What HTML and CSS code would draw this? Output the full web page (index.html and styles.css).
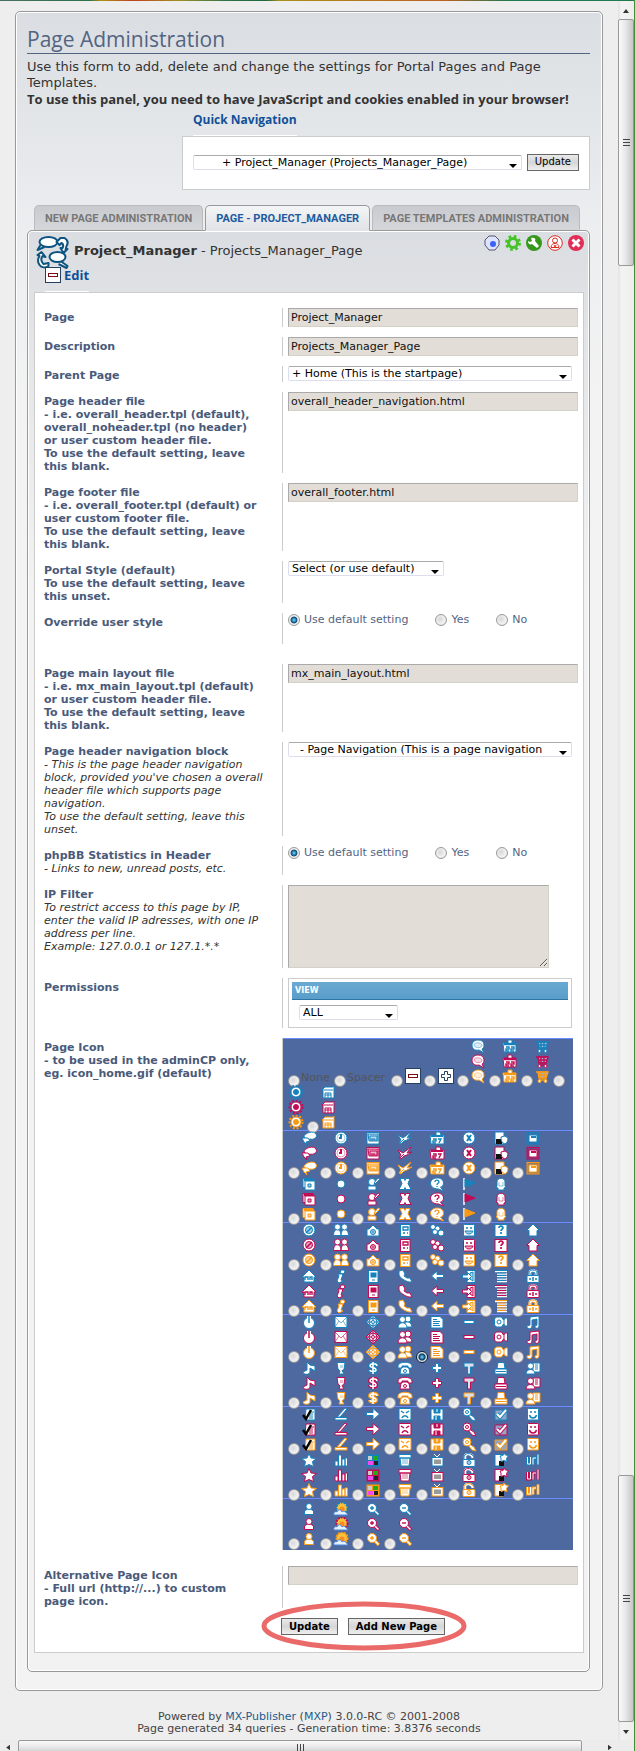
FILE: index.html
```html
<!DOCTYPE html>
<html lang="en">
<head>
<meta charset="utf-8">
<title>Page Administration</title>
<link rel="stylesheet" href="styles.css">
</head>
<body>
<div class="banner"></div>
<div class="window">
  <main class="page">
    <section class="panel">
      <h1>Page Administration</h1>
      <p class="intro">Use this form to add, delete and change the settings for Portal Pages and Page Templates.<br><b>To use this panel, you need to have JavaScript and cookies enabled in your browser!</b></p>

      <form class="quick">
        <label class="legend" for="quicknav">Quick Navigation</label>
        <div class="quick-box">
          <span class="drop drop-grow"><select id="quicknav" class="indent-l"><option>+ Project_Manager (Projects_Manager_Page)</option></select></span>
          <button type="button">Update</button>
        </div>
      </form>

      <nav class="tabs">
        <a class="tab" href="#">NEW PAGE ADMINISTRATION</a>
        <a class="tab active" href="#">PAGE - PROJECT_MANAGER</a>
        <a class="tab" href="#">PAGE TEMPLATES ADMINISTRATION</a>
      </nav>

      <div class="inner">
        <header class="head">
          <svg class="logo" viewBox="0 0 32 33" fill="#fff" stroke="#0d5480" stroke-width="2" stroke-linejoin="round">
            <path d="M4 9L1 14l7-3"/><ellipse cx="12" cy="6" rx="9" ry="5"/>
            <path d="M20 6l4-4h4c3 2 4 5 2 8l-1 4 2-1-4 4-3-5 2 0c1-2 1-4-1-5l-2 2z"/>
            <path d="M1 19l4-3 4 5-3-1c-2 3-1 6 1 8l5-1v3c-3 2-7 2-9-1-2-3-2-6 0-9z"/>
            <path d="M24 25l7 5-1 2-8-4"/><ellipse cx="21" cy="21" rx="8" ry="5"/>
          </svg>
          <div class="title"><b>Project_Manager</b> - Projects_Manager_Page</div>
          <div class="actions">
            <svg viewBox="0 0 16 16"><path d="M5 1h6l4 4v5l-4 5H5l-4-5V5z" fill="#dde3ff" stroke="#556" /><circle cx="9" cy="9" r="3" fill="#3c62f5"/></svg>
            <svg viewBox="0 0 16 16" fill="none" stroke="#45c42a"><circle cx="8" cy="8" r="6.5" stroke-width="3" stroke-dasharray="2.6 2.5"/><circle cx="8" cy="8" r="4.5" stroke-width="3"/></svg>
            <svg viewBox="0 0 16 16"><circle cx="8" cy="8" r="8" fill="#36981b"/><path d="M5 3l1 3-2 1-2-1c0 3 2 4 4 3l5 4 2-2-4-5c1-2 0-4-4-3z" fill="#fff"/></svg>
            <svg viewBox="0 0 16 16" fill="#fff" stroke="#e02a20"><circle cx="8" cy="8" r="7.3"/><circle cx="8" cy="5.5" r="2.5"/><path d="M4 12.5c0-3 2-4 4-4s4 1 4 4z"/><path d="M7 10l1 2 1-2"/></svg>
            <svg viewBox="0 0 16 16"><circle cx="8" cy="8" r="8" fill="#e22d56"/><path d="M4.5 4.5l7 7m0-7l-7 7" stroke="#fff" stroke-width="3"/></svg>
          </div>
        </header>
        <a class="edit" href="#"><svg viewBox="0 0 16 16"><rect x=".5" y=".5" width="15" height="15" fill="#fff" stroke="#26415f"/><rect x="3.5" y="6.5" width="9" height="3" fill="#fff" stroke="#7a0c12"/></svg>Edit</a>

        <form class="box">
          <div class="row">
            <label class="name" for="page">Page</label>
            <div class="field"><input id="page" class="text" type="text" value="Project_Manager"></div>
          </div>
          <div class="row">
            <label class="name" for="desc">Description</label>
            <div class="field"><input id="desc" class="text" type="text" value="Projects_Manager_Page"></div>
          </div>
          <div class="row">
            <label class="name" for="parent">Parent Page</label>
            <div class="field"><span class="drop drop-wide"><select id="parent"><option>+ Home (This is the startpage)</option></select></span></div>
          </div>
          <div class="row">
            <label class="name" for="hfile">Page header file<br>- i.e. overall_header.tpl (default),<br>overall_noheader.tpl (no header)<br>or user custom header file.<br>To use the default setting, leave<br>this blank.</label>
            <div class="field"><input id="hfile" class="text" type="text" value="overall_header_navigation.html"></div>
          </div>
          <div class="row">
            <label class="name" for="ffile">Page footer file<br>- i.e. overall_footer.tpl (default) or<br>user custom footer file.<br>To use the default setting, leave<br>this blank.</label>
            <div class="field"><input id="ffile" class="text" type="text" value="overall_footer.html"></div>
          </div>
          <div class="row">
            <label class="name" for="style">Portal Style (default)<br>To use the default setting, leave<br>this unset.</label>
            <div class="field"><span class="drop drop-mid"><select id="style"><option>Select (or use default)</option></select></span></div>
          </div>
          <div class="row row-override">
            <span class="name" id="over">Override user style</span>
            <div class="field radios" role="radiogroup" aria-labelledby="over">
              <label><input type="radio" name="over" checked>Use default setting</label>
              <label><input type="radio" name="over">Yes</label>
              <label><input type="radio" name="over">No</label>
            </div>
          </div>
          <div class="row">
            <label class="name" for="mfile">Page main layout file<br>- i.e. mx_main_layout.tpl (default)<br>or user custom header file.<br>To use the default setting, leave<br>this blank.</label>
            <div class="field"><input id="mfile" class="text" type="text" value="mx_main_layout.html"></div>
          </div>
          <div class="row">
            <label class="name" for="nav">Page header navigation block<br><i>- This is the page header navigation<br>block, provided you've chosen a overall<br>header file which supports page<br>navigation.<br>To use the default setting, leave this<br>unset.</i></label>
            <div class="field"><span class="drop drop-wide"><select id="nav" class="indent-s"><option>- Page Navigation (This is a page navigation</option></select></span></div>
          </div>
          <div class="row">
            <span class="name" id="stats">phpBB Statistics in Header<br><i>- Links to new, unread posts, etc.</i></span>
            <div class="field radios" role="radiogroup" aria-labelledby="stats">
              <label><input type="radio" name="stats" checked>Use default setting</label>
              <label><input type="radio" name="stats">Yes</label>
              <label><input type="radio" name="stats">No</label>
            </div>
          </div>
          <div class="row">
            <label class="name" for="ip">IP Filter<br><i>To restrict access to this page by IP,<br>enter the valid IP adresses, with one IP<br>address per line.<br>Example: 127.0.0.1 or 127.1.*.*</i></label>
            <div class="field"><textarea id="ip"></textarea></div>
          </div>
          <div class="row">
            <span class="name">Permissions</span>
            <div class="field">
              <div class="perm">
                <label class="view" for="view">VIEW</label>
                <span class="drop drop-small"><select id="view"><option>ALL</option></select></span>
              </div>
            </div>
          </div>
          <div class="row row-icons">
            <span class="name" id="picon">Page Icon<br>- to be used in the adminCP only,<br>eg. icon_home.gif (default)</span>
            <div class="icons" id="icons" role="radiogroup" aria-labelledby="picon"></div>
          </div>
          <div class="row">
            <label class="name" for="alt">Alternative Page Icon<br>- Full url (http://...) to custom<br>page icon.</label>
            <div class="field"><input id="alt" class="text" type="text"></div>
          </div>
          <div class="submit">
            <div class="submit-group">
              <button type="button">Update</button>
              <button type="button">Add New Page</button>
              <svg class="ring" viewBox="0 0 206 50"><ellipse cx="103" cy="25" rx="100" ry="22" fill="none" stroke="#ea6a69" stroke-width="5"/></svg>
            </div>
          </div>
        </form>
      </div>
    </section>
    <footer>Powered by <a href="#">MX-Publisher</a> (<a href="#">MXP</a>) 3.0.0-RC © 2001-2008<br>Page generated 34 queries - Generation time: 3.8376 seconds</footer>
  </main>
  <div class="vbar">
    <svg class="arrow" viewBox="0 0 16 18"><path d="M5 12l3-4 3 4z" fill="#333"/></svg>
    <div class="vthumb"><i></i><i></i><i></i></div>
    <div class="track"></div>
    <div class="vthumb"><i></i><i></i><i></i></div>
    <svg class="arrow" viewBox="0 0 16 18"><path d="M5 8h6l-3 4z" fill="#333"/></svg>
  </div>
</div>
<div class="hbar">
  <svg class="harrow" viewBox="0 0 18 16"><path d="M10 5v6l-4-3z" fill="#333"/></svg>
  <div class="hthumb"><i></i><i></i><i></i></div>
  <svg class="harrow harrow-end" viewBox="0 0 18 16"><path d="M9 5v6l4-3z" fill="#333"/></svg>
</div>
<script src="icons.js"></script>
</body>
</html>
```
FILE: styles.css
```css
* { box-sizing: border-box; }
body { margin: 0; background: #eee; color: #333; font: 11px/13px "DejaVu Sans", Verdana, sans-serif; border-right: 1px solid #3f8f35; }
a { color: #115098; text-decoration: none; }
button, input, select, textarea { font: inherit; margin: 0; border-radius: 0; }

.banner { height: 1px; background: linear-gradient(90deg, #4a7060, #2c7048 14%, #b09010 16%, #c04020 21%, #a09020 28%, #2c7048 36%, #20683c 42%, #a89018 44%, #c06020 70%, #20784c 80%); }
.window { display: grid; grid-template-columns: minmax(0, 1fr) 16px; }
.page { padding: 10px 15px 0; }

.panel { border: 1px solid #999; border-radius: 5px; padding: 13px 12px 18px 11px; box-shadow: inset 0 0 0 1px #fff; background: linear-gradient(#dadee2, #eceef0 220px, #f3f3f3 400px); }
h1 { margin: 0; height: 29px; font: 21px/28px "Open Sans", "Trebuchet MS", sans-serif; color: #536482; border-bottom: 1px solid #536482; }
.intro { margin: 5px 0 0; font-size: 13px; line-height: 16px; }
.intro b { font-family: "Open Sans", Verdana, sans-serif; }

.quick { margin: 4px 0 0 155px; }
.legend { display: block; width: max-content; margin-left: 11px; height: 24px; font: bold 12px/16px "Open Sans", "Trebuchet MS", sans-serif; color: #115098; border-bottom: 1px solid #fff; }
.quick-box { display: flex; align-items: center; gap: 5px; height: 54px; padding: 0 10px 2px; border: 1px solid #ccc; background: #fff; }

button { height: 17px; padding: 0 7px; border: 1px solid #666; background: linear-gradient(#e9e9e9, #d6d6d6 50%, #efefef); color: #000; font-size: 10px; line-height: 14px; }

.drop { position: relative; display: block; height: 15px; color: #000; }
.drop::after { content: ""; position: absolute; right: 5px; top: 9px; border: 4px solid transparent; border-top-color: #000; border-bottom: 0; pointer-events: none; }
.drop select { display: block; width: 100%; height: 15px; padding: 0 0 0 3px; appearance: none; border: 1px solid #dde; border-top-color: #aaa; border-radius: 2px; background: #fff; color: #000; line-height: 13px; }
.drop select.indent-l { padding-left: 28px; }
.drop select.indent-s { padding-left: 11px; }
.drop-grow { flex: 1; }
.drop-wide { margin-right: 6px; }
.drop-mid { width: 156px; }
.drop-small { width: 99px; margin: 5px 7px 4px; }

.tabs { display: flex; gap: 2px; margin: 15px 0 -1px 7px; }
.tab { height: 26px; padding: 0 10px; border: 1px solid #bbb; border-bottom-color: #999; border-radius: 5px 5px 0 0; background: linear-gradient(#c9cacf, #d5d6da); color: #777; font: bold 11px/26px Roboto, Arial, sans-serif; white-space: nowrap; }
.tab.active { position: relative; border-color: #999; border-bottom-color: #e4e6e9; background: linear-gradient(#f4f5f6, #e0e2e6); color: #1c5b9f; }

.inner { border: 1px solid #999; border-radius: 5px; padding: 4px 5px 18px 6px; box-shadow: inset 0 0 0 1px #fff; background: linear-gradient(#dadde1, #e2e4e7 100px, #f2f2f2 360px); }
.head { display: flex; align-items: flex-start; }
.logo { width: 33px; height: 33px; margin: 1px 0 -2px 2px; }
.title { flex: 1; padding-left: 5px; font-size: 13px; line-height: 32px; }
.actions { display: flex; gap: 5px; }
.actions svg { width: 16px; height: 16px; }
.edit { display: flex; gap: 3px; width: max-content; height: 25px; margin-left: 11px; font: bold 13px/16px "Open Sans", "Trebuchet MS", sans-serif; border-bottom: 1px solid #fff; }
.edit svg { width: 16px; height: 16px; }

.box { display: grid; gap: 10px; padding: 15px 5px 17px 9px; border: 1px solid #ccc; background: #fff; }
.row { display: grid; grid-template-columns: 238px minmax(0, 1fr); }
.name { padding-top: 3px; font-weight: bold; color: #4a5a7a; }
.name i { font-weight: normal; color: #333; }
.field { border-left: 1px solid #ccc; padding-left: 5px; }
.text, textarea { display: block; height: 19px; border: 1px solid #d4d1c6; border-top-color: #aaa; border-left-color: #aaa; background: #e2ddd7; color: #111; }
.text { width: 100%; padding: 0 0 0 2px; }
textarea { width: calc(100% - 29px); height: 83px; }
.row-override { min-height: 41px; padding-bottom: 10px; }
.radios { display: flex; gap: 27px; color: #536482; }
.radios label { display: flex; gap: 4px; height: 13px; }
input[type="radio"] { flex: none; appearance: none; width: 12px; height: 12px; border: 1px solid #999; border-radius: 50%; background: radial-gradient(circle at 40% 40%, #d8d8d8, #f2f2f2 60%, #ccc); }
.radios input { margin-top: 1px; }
input[type="radio"]:checked { background: radial-gradient(#56b8e8 10%, #0d4c74 42%, #f0f0f0 55%); }
.perm { margin-right: 6px; padding: 3px; border: 1px solid #ccc; }
.view { display: block; height: 18px; padding-left: 3px; background: linear-gradient(#6aaad2, #5a9dca); border-bottom: 1px solid #2f75a5; color: #fff; font-weight: bold; font-size: 8px; line-height: 18px; }
.row-icons { margin-bottom: 6px; }

.icons { margin-right: 5px; border-left: 1px solid #ccc; background: #4e68a0; color: #555; }
.block { display: grid; gap: 1px; padding-left: 5px; border-top: 1px solid #6b8cff; }
.block:last-child { padding-top: 3px; padding-bottom: 3px; }
.line { display: flex; height: 45px; }
.item { display: flex; align-items: flex-end; gap: 1px; width: 32px; }
.item input { margin-bottom: -3px; }
.item input:checked { border-color: #123; background: radial-gradient(#56b8e8 10%, #0d3c5c 42%, #dde6ee 60%); }
.item.none { width: 46px; }
.item.spacer { width: 57px; }
.item.sign { width: 33px; }
.item.lead { width: 19px; }
.item .word { line-height: 13px; }
.trio { display: grid; width: 16px; }
.trio svg, .item svg { display: block; width: 16px; height: 15px; }
.item .big { height: 16px; margin-left: 1px; }
.trio svg { fill: #fff; stroke: currentColor; }
.blue { color: #1583bd; }
.red { color: #c20a55; }
.orange { color: #fb9a12; }

.submit { padding-left: 237px; }
.submit-group { position: relative; display: flex; gap: 10px; width: max-content; }
.submit button { font-weight: bold; }
.ring { position: absolute; left: -20px; top: -17px; width: 206px; height: 50px; pointer-events: none; }

footer { padding: 20px 0 5px; text-align: center; line-height: 12px; color: #444; }
footer a { color: #1c5b8f; }

.vbar { display: flex; flex-direction: column; background: linear-gradient(90deg, #e2e2e2, #f3f3f3 20%, #eee); }
.arrow { width: 16px; height: 18px; }
.track { flex: 1; }
.vthumb { display: flex; flex-direction: column; justify-content: center; align-items: center; gap: 2px; height: 247px; border: 1px solid #999; border-radius: 2px; background: linear-gradient(90deg, #fafafa, #e8e8ea 45%, #c6c6ca); }
.vthumb i { width: 7px; height: 1px; background: #444; }
.hbar { display: flex; height: 15px; background: #ececec; }
.harrow { width: 18px; height: 15px; }
.hthumb { flex: 1; display: flex; justify-content: center; align-items: center; gap: 2px; border: 1px solid #999; border-radius: 2px; background: linear-gradient(#fafafa, #e8e8ea 45%, #c6c6ca); }
.hthumb i { width: 1px; height: 7px; background: #444; }
.harrow-end { margin: 0 17px; }
```
FILE: icons.js
```js
// Icon shapes on a 16x15 grid; "C" stands for the tint colour, default fill is white.
const shapes = {
  chat: '<path d="M8 1c4 0 6 2 6 5s-1 3-2 4l2 4-5-3C4 12 2 9 2 6s3-5 6-5z"/><path d="M4 6c0-3 7-3 8 0s-7 4-8 0" fill="C" fill-opacity=".15" stroke-opacity=".4"/>',
  cal: '<path d="M1 4h5V1h4v3h4v9H2z"/><path d="M2 5h12" stroke-width="2.5"/><path d="M4 8h3v2H4v2h3M9 8h3v2H9v2h3" fill="none" stroke-width="1.4"/>',
  cart: '<path d="M4 3l1 6h7l2-6z" fill-opacity=".5"/><path d="M2 3h2l1 6h7l2-6H4M4 6h9M7 3v6M10 3v6M5 11h8" fill="none" stroke-width="1.4"/><circle cx="5.5" cy="12" r="1.5"/><circle cx="11.5" cy="12" r="1.5"/>',
  gear: '<circle cx="8" cy="7" r="6.5" fill="none" stroke-width="2" stroke-dasharray="2 1.7"/><circle cx="8" cy="7" r="5" stroke-width="1"/><circle cx="8" cy="7" r="2.5" fill="C"/>',
  store: '<path d="M2 5l3-3h8l1-1v12H3V6z"/><path d="M3 5h10M5 13V8h6v5M5 10h6M8 8v5" fill="none"/>',
  chats: '<path d="M3 6c0-4 10-7 12-3s-3 6-6 5l-2 1z"/><path d="M1 7h6l2 3-4 1 1 3-3-3z"/>',
  clock: '<circle cx="8" cy="7" r="6"/><circle cx="8" cy="7" r="4" fill="none" stroke-opacity=".4"/><path d="M8 3v4H6" fill="none" stroke-width="2"/>',
  pc: '<rect x="2" y="1.5" width="12" height="11.5"/><path d="M3 3h10v7H4z" fill="C" fill-opacity=".3"/><path d="M5 5h7v4H5zM6 8h4" fill="none"/>',
  scissors: '<path d="M1 4l5 3 8-6-4 6 5-1-5 3-3 1-3 3-2-1 2-3z"/><path d="M3 12l4-4"/>',
  date: '<path d="M1 4h6V1h4l1 3h3v9H2z"/><path d="M2 5h12" stroke-width="2"/><path d="M4 8h3v2H4v2h3M9 8h3l-2 4" fill="none" stroke-width="1.4"/>',
  x: '<circle cx="8" cy="7" r="6"/><path d="M6 4l4 6M10 4l-4 6" stroke-width="2"/>',
  shield: '<path d="M2 1h9v12H2z"/><path d="M3 8h6v5H3z" fill="#111" stroke="none"/><path d="M8 6l4-1 3 2c0 3-1 5-3 6-3-1-4-3-4-7z"/>',
  frame: '<rect x="2" y="1.5" width="12" height="11.5" fill="C" fill-opacity=".4"/><rect x="4" y="4" width="8" height="7"/><path d="M6 6h5" stroke-width="2"/>',
  copy: '<path d="M2 1.5h10v9H2z"/><path d="M4 4h10v9H4z"/><path d="M7 7h3v3H7z" fill="C" fill-opacity=".4"/><path d="M3 3h10" stroke-width="2"/>',
  dot: '<path d="M8 3l3 1 1 3-1 3-3 1-3-1-1-3 1-3z"/>',
  edit: '<circle cx="7" cy="5" r="3.5"/><path d="M3 13V9h8v4z"/><path d="M9 6l4-5 2 1-5 5z"/>',
  expand: '<path d="M3 1.5h4l1 2 1-2h4l-2 5 3 6H9l-1-2-1 2H2l3-6z"/>',
  ask: '<path d="M8 1c4 0 6.5 2 6.5 5s-2 4-3 4l3 4-5-2C4 12 1.5 9 1.5 6S5 1 8 1z"/><path d="M6 5c0-3 4-2 4 0 0 1-2 1-2 3M8 9v1" fill="none" stroke-width="1.3"/>',
  flag: '<path d="M3 1v12" stroke="#fff" stroke-width="1.5"/><path d="M4 2l10 4-10 4z" fill="C"/>',
  ghost: '<path d="M4 9V5c0-5 8-5 8 0v4l1 1-2 1v2H5v-2l-2-1z"/><path d="M6 5v4h4V5" fill="none" stroke-opacity=".5"/>',
  forbid: '<circle cx="8" cy="7" r="6"/><circle cx="8" cy="7" r="3.5" fill="C" fill-opacity=".4"/><path d="M5 10l6-6" stroke-width="1.5"/>',
  group: '<path d="M.5 12.5c0-8 7.5-8 7.5 0zM8 12.5c0-8 7.5-8 7.5 0z"/><circle cx="4.5" cy="4" r="3"/><circle cx="11.5" cy="4" r="3"/>',
  camera: '<path d="M2 6h2l4-4 4 4h2v7H2z"/><circle cx="8" cy="9" r="2.5" fill="C" fill-opacity=".4"/><path d="M8 8v2"/>',
  pad: '<rect x="3.5" y="1.5" width="9.5" height="12"/><path d="M6 4h5v3H6zM6 10h2M10 10h1" stroke-width="1.3"/>',
  groups: '<circle cx="4" cy="4" r="2.5"/><circle cx="8.5" cy="5.5" r="2.5"/><circle cx="6" cy="9" r="2.5"/><circle cx="12" cy="10" r="3"/>',
  smiley: '<rect x="2.5" y="1.5" width="11" height="11.5" rx="1"/><path d="M6 4v2M10 4v2" stroke-width="1.5"/><path d="M4 8h8c-1 4-7 4-8 0z" fill="C" fill-opacity=".4"/>',
  question: '<rect x="2" y="1.5" width="12" height="12"/><path d="M6 5c0-3 4-2 4 0 0 1-2 1-2 3M8 9v2" fill="none" stroke-width="1.7"/>',
  up: '<path d="M8 1l6.5 6.5H12V13H4V7.5H1.5z"/>',
  home: '<path d="M1 8l7-7 7 7h-2v5H3V8z"/><path d="M4 11V8h3v3M9 11V8h2v3" fill="none" stroke-width="1.4"/>',
  info: '<path d="M8 1l3 0 1 2-2 2-3-1zM5 5h5l-2 6 2 1-4 2-2-2 2-5z"/>',
  pda: '<rect x="3.5" y="1.5" width="9.5" height="12"/><rect x="6" y="4" width="5" height="4" fill="C"/><path d="M7 11h3"/>',
  handset: '<path d="M2 2l4-1 2 4-1 2 3 2 3 0 2 4-3 0c-4-1-9-4-10-7z"/>',
  left: '<path d="M14.5 5.5H8V2L2.5 7 8 12V8.5h6.5z"/>',
  login: '<path d="M6 1.5h8v12H6z"/><path d="M9 4l3-1v9l-3-2z" fill="C" fill-opacity=".3"/><path d="M1.5 6h5V3.5l4 4-4 4V9h-5z"/>',
  list: '<path d="M2 2.5h12M4 5h10M4 7.5h10M4 10h10M4 12.5h10" stroke="#fff" stroke-width="1.5"/><path d="M2 1.5h12M4 4h9M4 6.5h9M4 9h9M4 11.5h9"/>',
  lock: '<path d="M5 7V4c0-3 6-3 6 0v3" fill="none" stroke="#fff" stroke-width="3"/><path d="M4 6V4c0-4 8-4 8 0v2M6 6V4c0-1 4-1 4 0v2" fill="none"/><rect x="2" y="6.5" width="12" height="7" rx="1"/><path d="M8 8v4M5 9v2M11 9v2" stroke-width="1.5"/>',
  power: '<circle cx="8" cy="8" r="5.5"/><path d="M8 1v7" stroke="#fff" stroke-width="4"/><path d="M8 1v7" stroke-width="1.5"/>',
  mail: '<rect x="2" y="1.5" width="12" height="11"/><path d="M2 2l6 6 6-6M2 12l4-6M14 12l-4-6" fill="none" stroke-opacity=".6"/>',
  target: '<path d="M8 0l7 7-7 7-7-7z" fill-opacity=".7"/><circle cx="8" cy="7" r="4" fill-opacity=".5"/><circle cx="8" cy="7" r="1.5"/><path d="M8 1v4M8 9v4M2 7h4M10 7h4"/>',
  people: '<path d="M7 12c0-7 7-7 8 0z"/><circle cx="11" cy="4" r="3"/><path d="M1 13c0-7 9-7 9 0z"/><circle cx="5.5" cy="4.5" r="3"/>',
  news: '<path d="M2 1.5h9l3 3V13H2z"/><path d="M4 4.5h4M4 6.5h7M4 8.5h6M4 10.5h7"/>',
  minus: '<rect x="3" y="5.5" width="10" height="3"/>',
  plus: '<path d="M6.5 2.5h3v3h3v3h-3v3h-3v-3h-3v-3h3z"/>',
  video: '<path d="M1.5 4l2-2h5l2 3 2-2h2v8h-2l-2-2-2 3h-5l-2-2z"/><circle cx="6" cy="7" r="2"/><path d="M11 4v6"/>',
  music: '<path d="M5 2l9-1v10c0 3-5 3-4 0l2-1V4L7 5v6c0 4-6 3-5 0l3-1z"/>',
  note: '<path d="M6 1l3 3 5 1v5l-5-3v4c0 3-7 3-7 0l4-2z"/>',
  glass: '<path d="M4 1.5h8l-1 7-2 1 2 3.5H6l1-3-2-2z"/><path d="M7 4h3v3H7z" fill="C" fill-opacity=".3" stroke="none"/>',
  dollar: '<path d="M12 5c0-3-7-3-7 0 0 2 6 1 6 4 0 2-6 2-6 0M8 1v12" fill="none" stroke-width="4"/><path d="M12 5c0-3-7-3-7 0 0 2 6 1 6 4 0 2-6 2-6 0M8 1v12" fill="none" stroke="#fff" stroke-width="1.5"/>',
  phone: '<path d="M3 13l1-6 2-1h4l2 1 1 6zM1 5c0-5 14-5 14 0v2h-4V5H5v2H1z"/><circle cx="8" cy="10" r="1.5"/>',
  tee: '<path d="M3 2h10v4H9.5v7h-3V6H3z" fill-opacity=".8"/>',
  printer: '<path d="M5 1.5h6l1 6H4zM2 8h12v5H2z"/><path d="M3 10.5h10"/>',
  contact: '<path d="M8 2h7v9H8z"/><path d="M10 4h3M10 6h3M10 8h3"/><path d="M1 13c0-6 9-6 9 0z"/><circle cx="5.5" cy="5" r="3"/>',
  check: '<path d="M5 2h9v11H4z"/><path d="M8 5h5M8 7h4M8 9h4M8 11h4"/><path d="M2 8l3 4 5-9" fill="none" stroke="#000" stroke-width="2.5"/>',
  pen: '<path d="M4 10l8-9 2 1-7 8z"/><path d="M2 10.5h12v2.5H2z"/>',
  right: '<path d="M1.5 5.5H8V1.5L14.5 7 8 13V8.5H1.5z"/>',
  sad: '<rect x="2" y="1.5" width="12" height="11.5" rx="1"/><path d="M4 4l3 2M12 4L9 6M5 11c1-3 5-3 6 0" fill="none" stroke-width="1.4"/>',
  save: '<path d="M2 2h12v11H2z"/><path d="M5 2h6v4H5zM5 9h6v4H5z" fill="C"/><path d="M7 9v4M8 2v3" stroke="#fff"/>',
  keys: '<path d="M8 7l5 3 2 4-4-1-4-5z"/><circle cx="6" cy="5" r="4"/><circle cx="6" cy="5" r="1.5"/>',
  tick: '<path d="M2 3h9l3-1v11H2z" fill="#fff" fill-opacity=".4"/><path d="M4 7l3 3 6-7" fill="none" stroke-width="4"/><path d="M4 7l3 3 6-7" fill="none" stroke="#fff" stroke-width="2"/>',
  smile: '<rect x="2.5" y="1.5" width="11" height="11.5" rx="1"/><path d="M6 4v2M10 4v2" stroke-width="1.5"/><path d="M4.5 8c1 4 6 4 7 0" fill="none" stroke-width="1.5"/>',
  star: '<path d="M8 .5l2 4.5 5.5.5-4 3 1 5-4.500-2-4.500 2 1-5-4-3L6 5z"/>',
  chart: '<path d="M2 8h3v5H2zM5.5 2h3v11h-3zM9 6h3v7H9zM12 5h2.5v8H12z"/>',
  squares: '<rect x="2" y="2" width="12" height="11" fill="C"/><path d="M3 3h4v4H3z" fill="#ccc" stroke="none"/><path d="M8 3h5v4H8z" fill="#1fae10" stroke="none"/><path d="M3 8h5v4H3z" fill="#f648f0" stroke="none"/><path d="M9 8h4v4H9z" fill="#222" stroke="none"/>',
  trash: '<path d="M3 5h10l-1 8H4zM2 1.5h12V5H2z"/><path d="M6 6v5M8 6v5M10 6v5" stroke-opacity=".6"/>',
  tv: '<path d="M5 1l3 3 3-3" fill="none" stroke="#fff"/><rect x="3" y="4.5" width="11" height="8.5"/><rect x="5" y="6.5" width="7" height="4.5" fill="#999" stroke="none"/>',
  unlock: '<path d="M4 6V3c1-3 7-3 8 2" fill="none" stroke="#fff" stroke-width="2.5"/><path d="M3 6V3c2-4 9-3 10 2" fill="none"/><rect x="2" y="6.5" width="12" height="7" rx="1"/><circle cx="8" cy="9.5" r="2" fill="C" fill-opacity=".4"/>',
  shapes: '<path d="M2 1.5h8V13H2z"/><path d="M6 8h5v5H6z" fill="#111" stroke="none"/><path d="M11 0l1.5 2 3 .5-2 3 .5 3-3-1-3 1V5L7 3l3-.5z"/>',
  url: '<path d="M2.5 4v7h3V4M8 11.5V5h3M13 1.5v10" fill="none" stroke-width="3"/><path d="M2.5 4v7h3V4M8 11.5V5h3M13 1.5v10" fill="none" stroke="#fff"/>',
  person: '<path d="M3.5 12.5V9l3-2h3l3 2v3.5z"/><circle cx="8" cy="4.5" r="3"/>',
  weather: '<circle cx="9" cy="6" r="5.5" fill="#f8c33a" stroke-width="2" stroke-dasharray="2 1"/><circle cx="9" cy="7" r="2.5" fill="#ff8a20" stroke="none"/><path d="M1 13c-1-3 2-4 3-3 1-3 4-3 5 0 2-2 4 0 6 3z" fill="#e4f2ff" stroke="#4b86dd"/>',
  zoomin: '<circle cx="7" cy="6" r="4.5"/><path d="M10 9l4 4" stroke-width="3.5"/><path d="M10 9l3.5 3.5" stroke="#fff" stroke-width="1.5"/><path d="M5 6h4M7 4v4" stroke-width="1.4"/>',
  zoomout: '<circle cx="7" cy="6" r="4.5"/><path d="M10 9l4 4" stroke-width="3.5"/><path d="M10 9l3.5 3.5" stroke="#fff" stroke-width="1.5"/><path d="M5 6h4" stroke-width="1.4"/>'
};
const sign = d => `<svg class="big" viewBox="0 0 16 16"><rect x=".5" y=".5" width="15" height="15" fill="#fff" stroke="#26415f"/>${d}</svg>`;
const minusSign = sign('<rect x="3.5" y="6.5" width="9" height="3" fill="#fff" stroke="#7a0c12"/>');
const plusSign = sign('<path d="M6.5 3.5h3v3h3v3h-3v3h-3v-3h-3v-3h3z" fill="#fff" stroke="#26415f"/>');

const trio = name => '<span class="trio">' + ['blue', 'red', 'orange'].map(tone =>
  `<svg class="${tone}" viewBox="0 0 16 15">${shapes[name].replace(/"C"/g, '"currentColor"')}</svg>`).join('') + '</span>';
const radio = name => `<input type="radio" name="icon" aria-label="${name}"${name === 'news' ? ' checked' : ''}>`;
const item = name => `<label class="item">${radio(name)}${shapes[name] ? trio(name) : ''}</label>`;
const line = names => `<div class="line">${names.split(' ').map(item).join('')}</div>`;
const block = lines => `<div class="block">${lines.join('')}</div>`;

const first = '<div class="line">' +
  `<label class="item none">${radio('none')}<span class="word">None</span></label>` +
  `<label class="item spacer">${radio('spacer')}<span class="word">Spacer</span></label>` +
  `<label class="item sign">${radio('contract')}${minusSign}</label>` +
  `<label class="item sign">${radio('expand all')}${plusSign}</label>` +
  item('chat') + item('cal') + item('cart') + item('other') + '</div>';
const second = `<div class="line"><span class="item lead">${trio('gear')}</span>${item('store')}</div>`;

document.getElementById('icons').innerHTML = [
  block([first, second]),
  block([line('chats clock pc scissors date x shield frame'), line('copy dot edit expand ask flag ghost blank')]),
  block([line('forbid group camera pad groups smiley question up'), line('home info pda handset left login list lock')]),
  block([line('power mail target people news minus video music'), line('note glass dollar phone plus tee printer contact')]),
  block([line('check pen right sad save keys tick smile'), line('star chart squares trash tv unlock shapes url')]),
  block([line('person weather zoomin zoomout')])
].join('');
```
